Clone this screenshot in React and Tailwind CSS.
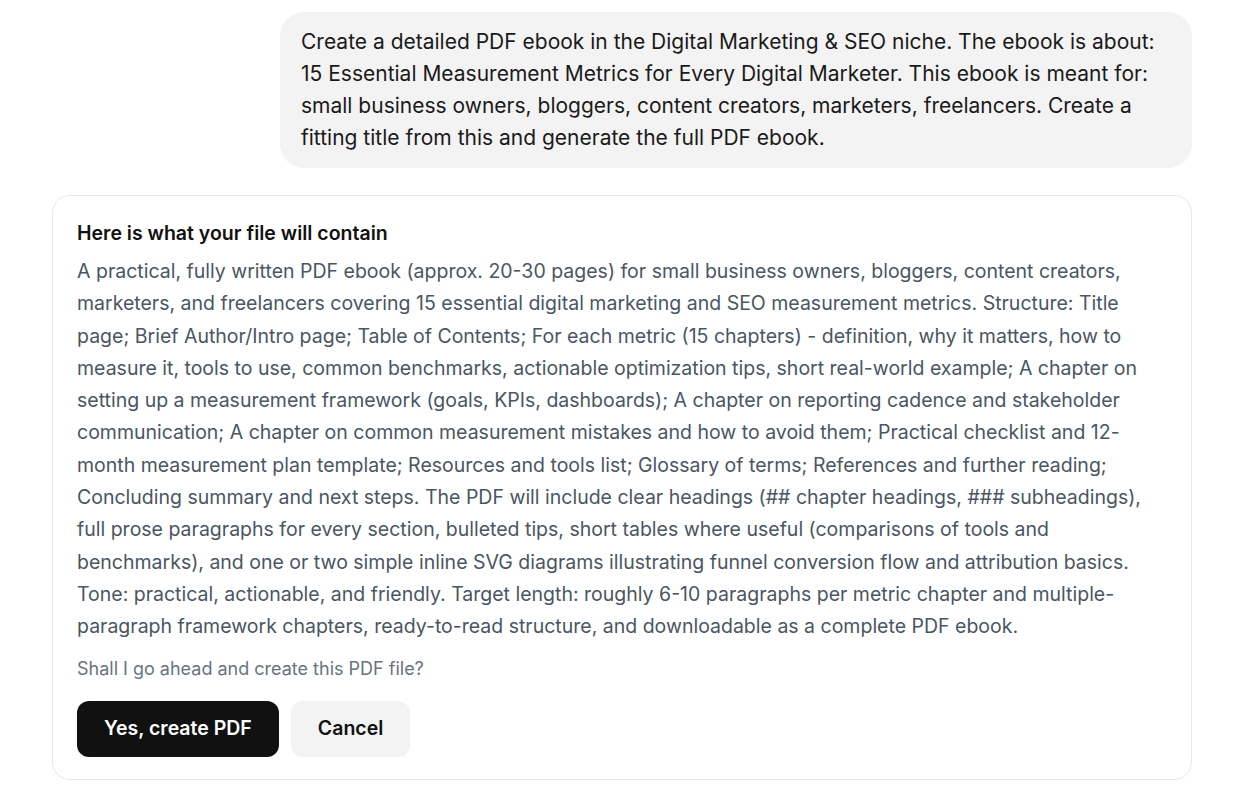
export default function App() {
  const plan =
    'A practical, fully written PDF ebook (approx. 20-30 pages) for small business owners, bloggers, content creators, marketers, and freelancers covering 15 essential digital marketing and SEO measurement metrics. Structure: Title page; Brief Author/Intro page; Table of Contents; For each metric (15 chapters) - definition, why it matters, how to measure it, tools to use, common benchmarks, actionable optimization tips, short real-world example; A chapter on setting up a measurement framework (goals, KPIs, dashboards); A chapter on reporting cadence and stakeholder communication; A chapter on common measurement mistakes and how to avoid them; Practical checklist and 12-month measurement plan template; Resources and tools list; Glossary of terms; References and further reading; Concluding summary and next steps. The PDF will include clear headings (## chapter headings, ### subheadings), full prose paragraphs for every section, bulleted tips, short tables where useful (comparisons of tools and benchmarks), and one or two simple inline SVG diagrams illustrating funnel conversion flow and attribution basics. Tone: practical, actionable, and friendly. Target length: roughly 6-10 paragraphs per metric chapter and multiple-paragraph framework chapters, ready-to-read structure, and downloadable as a complete PDF ebook.'

  return (
    <div className="min-h-screen bg-white font-['Inter',sans-serif] text-[#111]">
      <div className="ml-[52px] w-[1140px] pt-[12px]">
        <div className="flex justify-end">
          <div className="w-[912px] rounded-[24px] bg-[#f3f3f3] px-[21px] py-[14px] text-[21px] leading-[32px] text-[#1a1a1a]">
            Create a detailed PDF ebook in the Digital Marketing &amp; SEO niche. The ebook is about: 15 Essential Measurement Metrics for Every Digital Marketer. This ebook is meant for: small business owners, bloggers, content creators, marketers, freelancers. Create a fitting title from this and generate the full PDF ebook.
          </div>
        </div>

        <div className="mt-[27px] rounded-[18px] border border-[#e7e7e7] px-[24px] pb-[22px] pt-[23px]">
          <h2 className="text-[19.5px] font-semibold leading-[28px] text-[#111]">Here is what your file will contain</h2>
          <p className="mt-[8px] text-[19.5px] leading-[32.3px] text-[#4b5563]">{plan}</p>
          <p className="mt-[13px] text-[18px] leading-[26px] text-[#6b7280]">Shall I go ahead and create this PDF file?</p>
          <div className="mt-[19px] flex gap-3">
            <button className="h-[56px] rounded-[12px] bg-[#111] px-[27px] text-[19.5px] font-semibold text-white">Yes, create PDF</button>
            <button className="h-[56px] rounded-[12px] bg-[#f3f3f3] px-[27px] text-[19.5px] font-semibold text-[#111]">Cancel</button>
          </div>
        </div>
      </div>
    </div>
  )
}
